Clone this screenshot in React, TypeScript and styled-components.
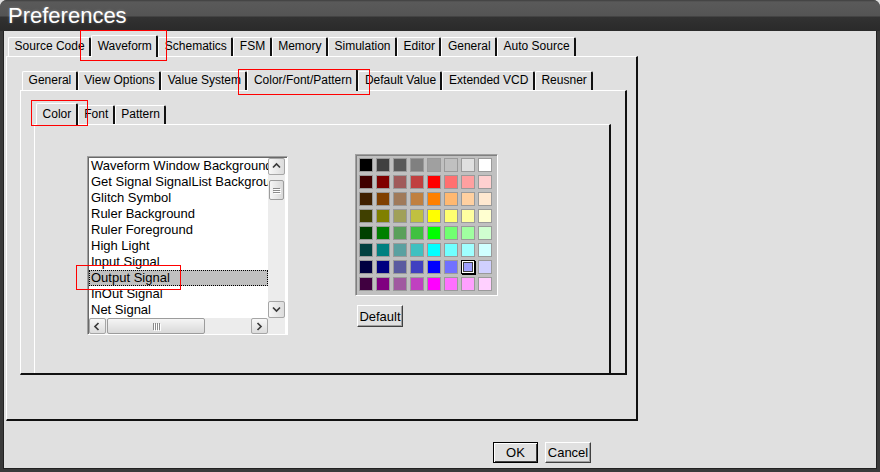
import * as React from "react";
import styled, { createGlobalStyle } from "styled-components";

const GlobalStyle = createGlobalStyle`
	html, body {
		margin: 0;
		padding: 0;
		background: #e0e0e0;
	}
	body {
		font-family: "Liberation Sans", Arial, sans-serif;
	}
	* {
		box-sizing: border-box;
	}
`;

const Window = styled.div`
	position: relative;
	width: 880px;
	height: 472px;
	display: flex;
	flex-direction: column;
	background: #3a3a3a;
	border-radius: 7px 7px 0 0;
	overflow: hidden;
`;

const TitleBar = styled.div`
	flex: none;
	height: 31px;
	padding-left: 8px;
	background: linear-gradient(
		to bottom,
		#3e3e3e 0,
		#5a5a5a 2px,
		#545454 16px,
		#323232 17px,
		#2a2a2a 31px
	);
	color: #fff;
	font-size: 22px;
	line-height: 32px;
	text-shadow: 0 0 3px rgba(255, 255, 255, 0.3);
`;

const Client = styled.div`
	flex: 1;
	margin: 0 3px 3px;
	border: 1px solid #222;
	border-top: none;
	background: #e0e0e0;
	padding: 4px 0 0 2px;
	display: flex;
	flex-direction: column;
`;

const Notebook = styled.div`
	display: flex;
	flex-direction: column;
	align-items: flex-start;
`;

const TabStrip = styled.div`
	display: flex;
	align-items: flex-end;
	height: 21px;
	padding-left: 2px;
	position: relative;
	z-index: 1;
`;

const Tab = styled.div<{ $active?: boolean }>`
	height: ${(p) => (p.$active ? 22 : 19)}px;
	margin-bottom: ${(p) => (p.$active ? -1 : 0)}px;
	padding: ${(p) => (p.$active ? 2 : 0)}px 4.4px 0 5.6px;
	border-top: 1px solid #fff;
	border-left: 1px solid #fff;
	border-right: 2px solid #111;
	border-radius: 2px 2px 0 0;
	background: #e0e0e0;
	font-size: 12px;
	line-height: 17px;
	color: #000;
	white-space: nowrap;
`;

const Panel = styled.div<{ $w: number; $h: number; $pad: string; $open?: boolean }>`
	width: ${(p) => p.$w}px;
	height: ${(p) => p.$h}px;
	padding: ${(p) => p.$pad};
	border-top: 1px solid #fff;
	border-left: 1px solid #fff;
	border-right: 2px solid #111;
	border-bottom: ${(p) => (p.$open ? "none" : "2px solid #111")};
`;

const ColorPage = styled.div`
	display: flex;
	align-items: flex-start;
	gap: 67px;
`;

const ListBox = styled.div`
	margin-top: 2px;
	width: 201px;
	height: 179px;
	border: 1px solid;
	border-color: #a0a0a0 #fff #fff #a0a0a0;
	box-shadow: inset 1px 1px 0 #696969;
	background: #fff;
	padding: 1px 2px 0 1px;
	display: grid;
	grid-template-columns: 179px 17px;
	grid-template-rows: 160px 16px;
`;

const Items = styled.div`
	overflow: hidden;
`;

const Item = styled.div<{ $selected?: boolean }>`
	height: 16px;
	padding-left: 2px;
	font-size: 13px;
	line-height: 16px;
	color: #000;
	white-space: nowrap;
	overflow: hidden;
	background: ${(p) => (p.$selected ? "#c0c0c0" : "transparent")};
	outline: ${(p) => (p.$selected ? "1px dotted #000" : "none")};
	outline-offset: -1px;
`;

const VScroll = styled.div`
	display: flex;
	flex-direction: column;
	background: #ececec;
`;

const HScroll = styled.div`
	display: flex;
	background: #ececec;
`;

const Corner = styled.div`
	background: #ececec;
`;

const ArrowBtn = styled.div<{ $horiz?: boolean }>`
	flex: none;
	width: 17px;
	height: ${(p) => (p.$horiz ? 16 : 17)}px;
	display: flex;
	align-items: center;
	justify-content: center;
	border: 1px solid #a6a6a6;
	border-radius: 2px;
	background: linear-gradient(${(p) => (p.$horiz ? "to bottom" : "to right")}, #f7f7f7, #dcdcdc);
`;

const Thumb = styled.div<{ $horiz?: boolean }>`
	flex: none;
	display: flex;
	flex-direction: ${(p) => (p.$horiz ? "row" : "column")};
	align-items: center;
	justify-content: center;
	gap: 1px;
	border: 1px solid #9c9c9c;
	border-radius: 2px;
	background: linear-gradient(${(p) => (p.$horiz ? "to bottom" : "to right")}, #f5f5f5, #d9d9d9);
	${(p) =>
		p.$horiz
			? "width: 98px; height: 16px; margin-left: 1px;"
			: "width: 15px; height: 20px; margin: 5px 0 0 1px;"}
`;

const Grip = styled.span<{ $horiz?: boolean }>`
	display: block;
	background: #8a8a8a;
	box-shadow: 1px 1px 0 #fff;
	${(p) => (p.$horiz ? "width: 1px; height: 7px;" : "width: 7px; height: 1px;")}
`;

const Spacer = styled.div`
	flex: 1;
`;

const PaletteCol = styled.div`
	display: flex;
	flex-direction: column;
	align-items: flex-start;
	gap: 9px;
`;

const Palette = styled.div`
	width: 143px;
	height: 142px;
	border: 1px solid;
	border-color: #a0a0a0 #fff #fff #a0a0a0;
	box-shadow: inset 1px 1px 0 #808080;
	background: #c0c0c0;
	padding: 3px 0 0 3px;
	display: grid;
	grid-template-columns: repeat(8, 14px);
	grid-auto-rows: 14px;
	gap: 3px;
`;

const Swatch = styled.div<{ $c: string; $sel?: boolean }>`
	background: ${(p) => p.$c};
	border: 1px solid ${(p) => (p.$sel ? "#000" : "#9a9a9a")};
	box-shadow: ${(p) =>
		p.$sel ? "1px 1px 0 #000, inset 0 0 0 1px #fff, inset 0 0 0 2px #404040" : "none"};
`;

const Button = styled.button<{ $w: number; $h: number; $default?: boolean }>`
	width: ${(p) => p.$w}px;
	height: ${(p) => p.$h}px;
	padding: 0;
	background: #e0e0e0;
	font-family: "Liberation Sans", Arial, sans-serif;
	font-size: 13px;
	color: #000;
	border: 1px solid;
	border-color: ${(p) => (p.$default ? "#000" : "#fff #404040 #404040 #fff")};
	box-shadow: ${(p) =>
		p.$default
			? "inset 1px 1px 0 #fff, inset -1px -1px 0 #404040"
			: "inset -1px -1px 0 #a0a0a0"};
`;

const DefaultButton = styled(Button)`
	margin-left: 2px;
`;

const ButtonRow = styled.div`
	display: flex;
	gap: 7px;
	padding: 21px 0 0 487px;
`;

const Marker = styled.div<{ $x: number; $y: number; $w: number; $h: number }>`
	position: absolute;
	left: ${(p) => p.$x}px;
	top: ${(p) => p.$y}px;
	width: ${(p) => p.$w}px;
	height: ${(p) => p.$h}px;
	border: 1px solid #f00;
	pointer-events: none;
	z-index: 5;
`;

type Dir = "up" | "down" | "left" | "right";

function Chevron({ dir }: { dir: Dir }) {
	const pts = {
		up: "1,5.5 4.5,2 8,5.5",
		down: "1,2.5 4.5,6 8,2.5",
		left: "5.5,1 2,4.5 5.5,8",
		right: "2.5,1 6,4.5 2.5,8",
	}[dir];
	return (
		<svg width="9" height="9" viewBox="0 0 9 9">
			<polyline points={pts} fill="none" stroke="#3a3a3a" strokeWidth="1.7" />
		</svg>
	);
}

const topTabs = ["Source Code", "Waveform", "Schematics", "FSM", "Memory", "Simulation", "Editor", "General", "Auto Source"];
const waveTabs = ["General", "View Options", "Value System", "Color/Font/Pattern", "Default Value", "Extended VCD", "Reusner"];
const cfpTabs = ["Color", "Font", "Pattern"];

const items = [
	"Waveform Window Background",
	"Get Signal SignalList Background",
	"Glitch Symbol",
	"Ruler Background",
	"Ruler Foreground",
	"High Light",
	"Input Signal",
	"Output Signal",
	"InOut Signal",
	"Net Signal",
];

const palette = [
	["#000000", "#404040", "#5a5a5a", "#808080", "#a0a0a0", "#c0c0c0", "#e0e0e0", "#ffffff"],
	["#400000", "#800000", "#a05a5a", "#c04040", "#ff0000", "#ff7070", "#ffa0a0", "#ffd0d0"],
	["#402000", "#804000", "#a07a5a", "#c08040", "#ff8000", "#ffb870", "#ffd0a0", "#ffe8d0"],
	["#404000", "#808000", "#a0a05a", "#c0c040", "#ffff00", "#ffff70", "#ffffa0", "#ffffd0"],
	["#004000", "#008000", "#5aa05a", "#40c040", "#00ff00", "#70ff70", "#a0ffa0", "#d0ffd0"],
	["#004040", "#008080", "#5aa0a0", "#40c0c0", "#00ffff", "#70ffff", "#a0ffff", "#d0ffff"],
	["#000040", "#000080", "#5a5aa0", "#4040c0", "#0000ff", "#7070ff", "#a0a0ff", "#d0d0ff"],
	["#400040", "#800080", "#a05aa0", "#c040c0", "#ff00ff", "#ff70ff", "#ffa0ff", "#ffd0ff"],
];

export default function App() {
	return (
		<>
			<GlobalStyle />
			<Window>
				<TitleBar>Preferences</TitleBar>
				<Client>
					<Notebook>
						<TabStrip>
							{topTabs.map((t) => (
								<Tab key={t} $active={t === "Waveform"}>
									{t}
								</Tab>
							))}
						</TabStrip>
						<Panel $w={632} $h={365} $pad="12px 0 0 13px">
							<Notebook>
								<TabStrip>
									{waveTabs.map((t) => (
										<Tab key={t} $active={t === "Color/Font/Pattern"}>
											{t}
										</Tab>
									))}
								</TabStrip>
								<Panel $w={607} $h={285} $pad="12px 0 0 13px">
									<Notebook>
										<TabStrip>
											{cfpTabs.map((t) => (
												<Tab key={t} $active={t === "Color"}>
													{t}
												</Tab>
											))}
										</TabStrip>
										<Panel $w={577} $h={249} $pad="29px 0 0 52px" $open>
											<ColorPage>
												<ListBox>
													<Items>
														{items.map((it) => (
															<Item key={it} $selected={it === "Output Signal"}>
																{it}
															</Item>
														))}
													</Items>
													<VScroll>
														<ArrowBtn>
															<Chevron dir="up" />
														</ArrowBtn>
														<Thumb>
															<Grip />
															<Grip />
															<Grip />
														</Thumb>
														<Spacer />
														<ArrowBtn>
															<Chevron dir="down" />
														</ArrowBtn>
													</VScroll>
													<HScroll>
														<ArrowBtn $horiz>
															<Chevron dir="left" />
														</ArrowBtn>
														<Thumb $horiz>
															<Grip $horiz />
															<Grip $horiz />
															<Grip $horiz />
															<Grip $horiz />
														</Thumb>
														<Spacer />
														<ArrowBtn $horiz>
															<Chevron dir="right" />
														</ArrowBtn>
													</HScroll>
													<Corner />
												</ListBox>
												<PaletteCol>
													<Palette>
														{palette.map((row, r) =>
															row.map((c, i) => (
																<Swatch key={`${r}-${i}`} $c={c} $sel={r === 6 && i === 6} />
															))
														)}
													</Palette>
													<DefaultButton $w={46} $h={22}>
														Default
													</DefaultButton>
												</PaletteCol>
											</ColorPage>
										</Panel>
									</Notebook>
								</Panel>
							</Notebook>
						</Panel>
					</Notebook>
					<ButtonRow>
						<Button $w={45} $h={21} $default>
							OK
						</Button>
						<Button $w={46} $h={21}>
							Cancel
						</Button>
					</ButtonRow>
				</Client>
				<Marker $x={80} $y={30} $w={87} $h={31} />
				<Marker $x={238} $y={69} $w={132} $h={26} />
				<Marker $x={31} $y={100} $w={57} $h={26} />
				<Marker $x={76} $y={265} $w={105} $h={25} />
			</Window>
		</>
	);
}
